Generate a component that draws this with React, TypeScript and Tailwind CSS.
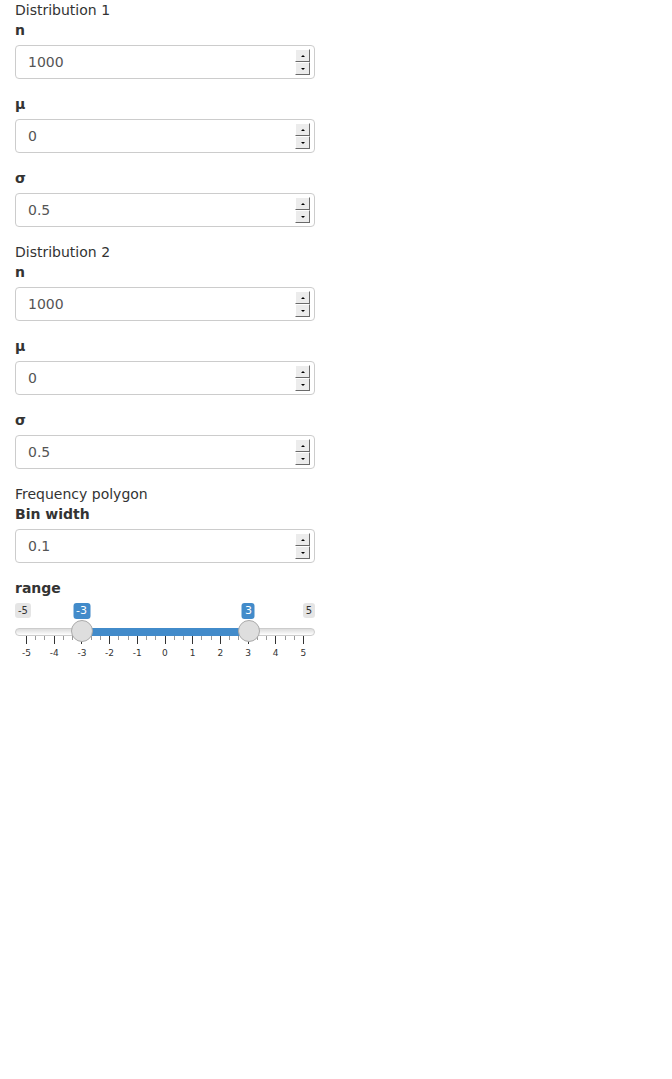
import React from 'react';

function Spin() {
  return (
    <div className="flex flex-col">
      <div className="flex h-[13px] w-[15px] items-center justify-center border-t border-l border-t-white border-l-white border-r border-b border-r-[#6a6a6a] border-b-[#6a6a6a] bg-[#ececec]">
        <div className="h-0 w-0 border-x-[2px] border-b-[2px] border-x-transparent border-b-black" />
      </div>
      <div className="flex h-[13px] w-[15px] items-center justify-center border-t border-l border-t-white border-l-white border-r border-b border-r-[#6a6a6a] border-b-[#6a6a6a] bg-[#ececec]">
        <div className="h-0 w-0 border-x-[2px] border-t-[2px] border-x-transparent border-t-black" />
      </div>
    </div>
  );
}

function NumField({ label, value }: { label: string; value: string }) {
  return (
    <div className="mb-[15px]">
      <div className="mb-[5px] font-bold leading-5">{label}</div>
      <div className="flex h-[34px] w-[300px] items-center justify-between rounded border border-[#ccc] bg-white pl-3 pr-[4px] text-[#555]">
        <span>{value}</span>
        <Spin />
      </div>
    </div>
  );
}

const ticks = [-5, -4, -3, -2, -1, 0, 1, 2, 3, 4, 5];

function RangeSlider() {
  const pos = (v: number) => 11 + ((v + 5) / 10) * 278;
  return (
    <div className="relative w-[300px] pb-[2px]">
      <div className="flex justify-between text-[10px] leading-[13px] text-[#333]">
        <span className="rounded-[3px] bg-black/10 px-[3px] py-[1px]">-5</span>
        <span className="rounded-[3px] bg-black/10 px-[3px] py-[1px]">5</span>
      </div>
      <div className="mt-[10px] h-[8px] rounded-full border border-[#ccc] bg-gradient-to-b from-[#dcdcdc] to-white" />
      <div className="mx-[11px] flex">
        {ticks.slice(0, -1).map((t) => (
          <div key={t} className="grid flex-1 grid-cols-3 items-start">
            <div className="h-[8px] w-px bg-black/80" />
            <div className="h-[4px] w-px bg-black/40" />
            <div className="h-[4px] w-px bg-black/40" />
          </div>
        ))}
        <div className="h-[8px] w-px bg-black/80" />
      </div>
      <div className="mx-[11px] mt-[4px] flex justify-between text-[9px] leading-[11px] text-[#333]">
        {ticks.map((t) => (
          <div key={t} className="flex w-px justify-center whitespace-nowrap">{t}</div>
        ))}
      </div>
      {/* overlays: bar, value labels, handles */}
      <div className="absolute top-[25px] h-[8px] bg-[#428bca]" style={{ left: pos(-3), width: pos(3) - pos(-3) }} />
      <span className="absolute top-0 -translate-x-1/2 rounded-[3px] bg-[#428bca] px-[3px] py-[1px] text-[11px] leading-[14px] text-white" style={{ left: pos(-3) }}>-3</span>
      <span className="absolute top-0 -translate-x-1/2 rounded-[3px] bg-[#428bca] px-[3px] py-[1px] text-[11px] leading-[14px] text-white" style={{ left: pos(3) }}>3</span>
      <div className="absolute top-[17px] h-[22px] w-[22px] -translate-x-1/2 rounded-full border border-[#aaa] bg-[#dedede]" style={{ left: pos(-3) + 0.5 }} />
      <div className="absolute top-[17px] h-[22px] w-[22px] -translate-x-1/2 rounded-full border border-[#aaa] bg-[#dedede]" style={{ left: pos(3) + 0.5 }} />
    </div>
  );
}

export default function App() {
  return (
    <div className="min-h-[1079px] bg-white px-[15px] text-[14px] leading-5 text-[#333] [font-family:'DejaVu_Sans',sans-serif]">
      <div>Distribution 1</div>
      <NumField label="n" value="1000" />
      <NumField label="μ" value="0" />
      <NumField label="σ" value="0.5" />
      <div>Distribution 2</div>
      <NumField label="n" value="1000" />
      <NumField label="μ" value="0" />
      <NumField label="σ" value="0.5" />
      <div>Frequency polygon</div>
      <NumField label="Bin width" value="0.1" />
      <div>
        <div className="mb-[5px] font-bold leading-5">range</div>
        <RangeSlider />
      </div>
    </div>
  );
}
